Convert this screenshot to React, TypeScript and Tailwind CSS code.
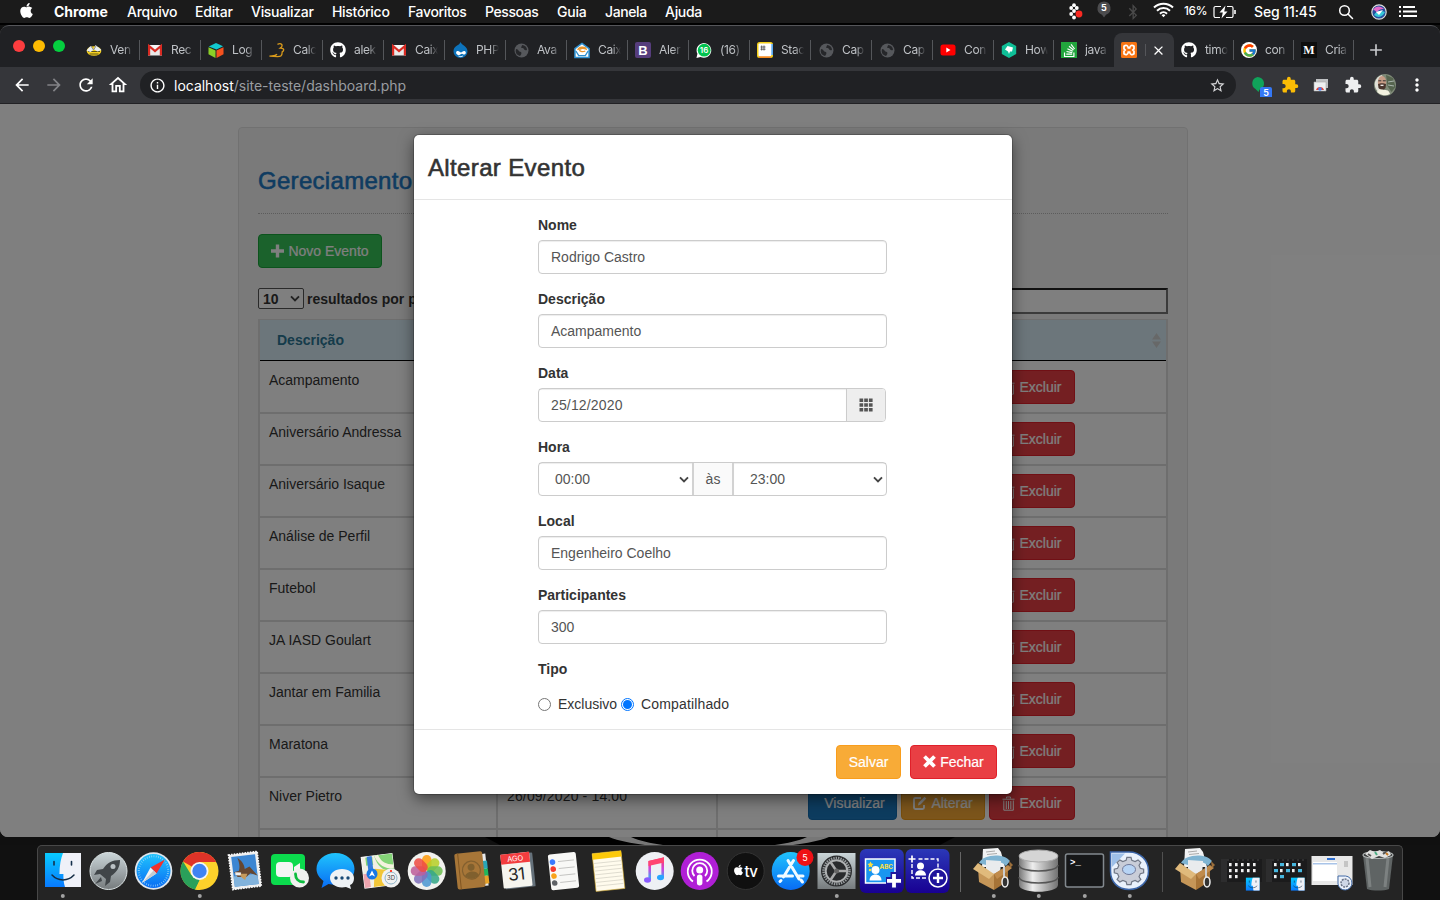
import React from "react";
import { FaApple, FaGithub, FaBluetoothB, FaStackOverflow } from "react-icons/fa";
import {
  MdArrowBack,
  MdArrowForward,
  MdRefresh,
  MdOutlineHome,
  MdInfoOutline,
  MdStarOutline,
  MdMoreVert,
  MdExtension,
  MdClose,
  MdAdd,
} from "react-icons/md";
import { FcGoogle } from "react-icons/fc";

/* ---------- menu bar ---------- */

function MenuBar() {
  return (
    <header className="flex h-[23px] items-center bg-[#1b1b1b] text-[14px] font-medium text-white whitespace-nowrap">
      <div className="flex w-[54px] justify-center pr-px pb-0.5"><FaApple className="h-[17px] w-[17px]" /></div>
      <span className="w-[73px] pb-px font-bold tracking-[-0.05px]">Chrome</span>
      <span className="w-[68px] pb-px tracking-[-0.25px]">Arquivo</span>
      <span className="w-[56px] pb-px tracking-[-0.2px]">Editar</span>
      <span className="w-[81px] pb-px tracking-[-0.3px]">Visualizar</span>
      <span className="w-[76px] pb-px tracking-[-0.3px]">Histórico</span>
      <span className="w-[77px] pb-px tracking-[-0.35px]">Favoritos</span>
      <span className="w-[72px] pb-px tracking-[-0.4px]">Pessoas</span>
      <span className="w-[48px] pb-px tracking-[-0.2px]">Guia</span>
      <span className="w-[60px] pb-px tracking-[-0.4px]">Janela</span>
      <span className="pb-px tracking-[-0.3px]">Ajuda</span>
      <div className="ml-auto flex h-full w-[380px] items-center">
        <span className="flex w-[30px] justify-center">
          <svg width="15" height="18" viewBox="0 0 15 18">
            <g fill="#fff">
              <circle cx="6" cy="2.2" r="1.9" /><circle cx="3.2" cy="5" r="1.9" /><circle cx="8.800" cy="5" r="1.9" />
              <circle cx="6" cy="8" r="1.9" /><circle cx="3.2" cy="11" r="1.9" /><circle cx="6" cy="14.500" r="1.9" />
            </g>
            <circle cx="11" cy="11" r="3.4" fill="#fa2a22" />
          </svg>
        </span>
        <span className="flex w-[28px] justify-center pb-1">
          <svg width="16" height="17" viewBox="0 0 16 17">
            <path d="M8 .5a6.8 6.8 0 0 1 2 13.2L8 16.500l-2-2.8A6.8 6.8 0 0 1 8 .5z" fill="#4c4c4e" />
            <text x="8" y="10.300" textAnchor="middle" fontSize="9" fontWeight="700" fill="#fff">5</text>
          </svg>
        </span>
        <span className="flex w-[29px] justify-center text-[#4a4a4a]"><FaBluetoothB className="h-[16px] w-[14px]" /></span>
        <span className="flex w-[37px] pb-1 pl-[6px]">
          <svg width="21" height="16" viewBox="0 0 21 16" fill="none" stroke="#fff" strokeWidth="2">
            <path d="M1 5.500a13.600 13.600 0 0 1 19 0M4 8.700a9.300 9.300 0 0 1 13 0M7 11.700a5 5 0 0 1 7 0" />
            <path d="M8.600 13.200L10.500 15.200l1.900-2a2.800 2.800 0 0 0-3.800 0z" fill="#fff" stroke="none" />
          </svg>
        </span>
        <span className="w-[29px] text-[11.8px] tracking-[-0.3px]">16%</span>
        <svg width="24" height="14" viewBox="0 0 24 14" fill="none" stroke="#fff" strokeWidth="1.2">
          <path d="M8 1.500H2.500a1.500 1.500 0 0 0-1.500 1.500v8a1.500 1.500 0 0 0 1.500 1.500H7M14 1.500h4.500A1.500 1.500 0 0 1 20 3v8a1.500 1.500 0 0 1-1.500 1.500H13" />
          <path d="M22 5v4" strokeWidth="1.600" />
          <path d="M12.500.500L6.500 7.500h3.300l-1.300 6L14.500 6.500h-3.300z" fill="#fff" stroke="none" />
        </svg>
        <span className="ml-[17px] w-[83px] pb-px tracking-[-0.1px]">Seg 11:45</span>
        <svg className="ml-[1px]" width="16" height="16" viewBox="0 0 16 16" fill="none" stroke="#fff" strokeWidth="1.500">
          <circle cx="6.500" cy="6.500" r="4.800" /><path d="M10 10l4.500 4.500" strokeLinecap="round" />
        </svg>
        <svg className="ml-[17px]" width="16" height="16" viewBox="0 0 16 16">
          <circle cx="8" cy="8" r="7.2" fill="#264e9c" stroke="#ddd" strokeWidth="1.2" />
          <path d="M2 6c3-5 8-4 11-1-4 0-6 1-7 4-1-2-2-3-4-3z" fill="#e56acb" />
          <path d="M3 11c2-4 7-5 11-3-2 4-6 7-11 3z" fill="#35c7d9" />
          <path d="M5 8l7-2-4 5z" fill="#fff" />
        </svg>
        <svg className="ml-[12px]" width="18" height="13" viewBox="0 0 18 13" stroke="#fff" strokeWidth="2">
          <path d="M0 2h2M0 6.500h2M0 11h2M4 2h12M4 6.500h14M4 11h14" />
        </svg>
      </div>
    </header>
  );
}

/* ---------- favicons ---------- */

const Gmail = () => (
  <svg width="14" height="14" viewBox="0 0 14 14">
    <path d="M0 2h14v10.500H0z" fill="#e9e9e9" />
    <path d="M1.100 12.500V3L7 8l5.900-5v9.500" fill="none" stroke="#d92a22" strokeWidth="2.200" />
    <path d="M2.500 2h9L7 6z" fill="#f7f7f7" />
  </svg>
);
const Planet = () => (
  <svg width="15" height="15" viewBox="0 0 15 15">
    <circle cx="7.500" cy="7.500" r="7" fill="#56585c" />
    <path d="M2 6c3 0 2 3 5 3 1 1 0 3-1 4-3-1-5-3-4-7zM8 2c0 2-2 2 0 3 3 0 1 3 5 2 0-3-2-4.500-5-5z" fill="#26272a" />
  </svg>
);
const Github = () => <FaGithub className="h-4 w-4 text-white" />;
const Bee = () => (
  <svg width="16" height="16" viewBox="0 0 16 16">
    <ellipse cx="8" cy="9" rx="7.300" ry="4.800" fill="#f5d020" />
    <path d="M2 9.500h12M3.500 12h9" stroke="#5e5415" />
    <path d="M.5 8.500L4.500 4l3 3.500L9.500 3 15.500 8l-4 1.500L8 7.500 4.500 10z" fill="#e8edf3" />
    <path d="M5 4l2.500 4L10 4" stroke="#8b8e90" fill="none" />
  </svg>
);
const Cube = () => (
  <svg width="17" height="17" viewBox="0 0 17 17">
    <path d="M8.500.5L16 4 9 7.500.8 4.200z" fill="#12c9cf" />
    <path d="M.5 5L8 8.500v8L.5 12.500z" fill="#8bcf26" />
    <path d="M9 8.500L16.500 5v7.500l-7.500 4z" fill="#f4511e" />
  </svg>
);
const Duck = () => (
  <svg width="17" height="17" viewBox="0 0 17 17" fill="none" stroke="#d89a1c" strokeWidth="1.400">
    <path d="M9 2c4-2 7 1 3 4 5 0 4 3 2 4 0 5-2 5-5 5L.5 14.500c3-.5 6 .5 8-2" />
  </svg>
);
const Mail = () => (
  <svg width="17" height="17" viewBox="0 0 17 17">
    <path d="M1 6.500L8.500 1 16 6.500V16H1z" fill="#fff" stroke="#2d8fd0" strokeWidth="1.600" />
    <path d="M2 9l3 5h7l3-5" fill="none" stroke="#2d8fd0" strokeWidth="1.400" />
    <path d="M4 8c1-4 8-4 9-1-3-1-7-1-7 1s4 2 6 1" fill="none" stroke="#e8952e" strokeWidth="1.400" />
  </svg>
);
const Boot = () => <span className="flex h-4 w-4 shrink-0 items-center justify-center rounded-[2px] bg-[#563d7c] font-['Liberation_Sans',sans-serif] text-[13px] leading-none font-bold text-white">B</span>;
const Whats = () => (
  <svg width="17" height="17" viewBox="0 0 17 17">
    <path d="M.5 16.500l1-4.500a7.800 7.800 0 1 1 3.300 3.300z" fill="#fff" />
    <circle cx="8.700" cy="8.200" r="6.800" fill="#00c34e" />
    <text x="8.500" y="11.200" textAnchor="middle" fontSize="8.500" fontWeight="600" fill="#fff">16</text>
  </svg>
);
const Stackblock = () => (
  <svg width="16" height="16" viewBox="0 0 16 16">
    <rect width="16" height="16" rx="2.500" fill="#f4cf1a" />
    <path d="M14 2h2v11h-2z" fill="#5aa9ee" />
    <path d="M2 14h12v2H2z" fill="#f58a1f" />
    <rect x="1.500" y="1.500" width="12.800" height="12.800" rx="1" fill="#fff" />
    <path d="M4.700 3.500v5M7 3.500v5M3.500 5h5M3.500 7.200h5" stroke="#444" strokeWidth=".8" />
  </svg>
);
const Youtube = () => (
  <svg width="16" height="12" viewBox="0 0 16 12"><rect x=".5" y=".5" width="15" height="11" rx="2.500" fill="#f00" /><path d="M6.300 3.500v5l4.200-2.500z" fill="#fff" /></svg>
);
const Hex = () => (
  <svg width="16" height="16" viewBox="0 0 16 16">
    <path d="M8 0l7.200 4v8L8 16 .8 12V4z" fill="#0fbf97" />
    <path d="M6.500 4l5.500 1.500L11 9.500H9L8 12 7 9.500 4 7.500z" fill="#fff" />
  </svg>
);
const StackO = () => <span className="flex h-4 w-4 shrink-0 items-center justify-center bg-[#22a63d] text-white"><FaStackOverflow className="h-[15px] w-[15px]" /></span>;
const Google = () => <span className="flex h-4 w-4 shrink-0 items-center justify-center rounded-full bg-white"><FcGoogle className="h-[15px] w-[15px]" /></span>;
const Medium = () => <span className="flex h-4 w-4 shrink-0 items-center justify-center bg-[#0d0d0d] font-['Liberation_Serif',serif] text-[12px] leading-none font-bold text-white">M</span>;
const Drupal = () => (
  <svg width="15" height="16" viewBox="0 0 15 16">
    <path d="M7.500 0c1 2 2 2.500 4 4 2 1.600 3 3.500 3 5.500a7 6.500 0 0 1-14 0C.5 7 1.500 5.500 3 4.300 5 3 7 2 7.500 0z" fill="#0d73bb" />
    <path d="M3.500 9.500c2-1.500 3.500 1 4.500 1s2-2 4-1.300c2 1.300 0 4-1.500 3.300-1-.8-2-1-3.500.2-2 1.300-5-1.200-3.500-3.200z" fill="#fff" />
    <path d="M5.500 14c1.500.8 3 .8 4.300 0" fill="none" stroke="#fff" />
  </svg>
);
const Xampp = () => (
  <svg width="16" height="16" viewBox="0 0 16 16">
    <rect width="16" height="16" rx="1.500" fill="#f77412" />
    <path d="M3 4.200c2-1.500 4-.8 4.300 1.800h1.400C9 3.400 11 2.700 13 4.200v2.600L11.800 8l1.200 1.200v2.600c-2 1.500-4 .8-4.300-1.800H7.300C7 12.600 5 13.300 3 11.800V9.200L4.200 8 3 6.800z" fill="none" stroke="#fff" strokeWidth="1.700" />
  </svg>
);

const wideTabs: [string, React.FC][] = [
  ["Ven", Bee], ["Rec", Gmail], ["Log", Cube], ["Calc", Duck], ["alek", Github], ["Caix", Gmail],
  ["PHP", Drupal], ["Ava", Planet], ["Caix", Mail], ["Aler", Boot], ["(16)", Whats], ["Stac", Stackblock],
  ["Cap", Planet], ["Cap", Planet], ["Con", Youtube],
];
const midTabs: [string, React.FC][] = [["How", Hex], ["java", StackO]];
const endTabs: [string, React.FC][] = [["timo", Github], ["con", Google], ["Cria", Medium]];

function Tab({ label, Icon, wide, last }: { label: string; Icon: React.FC; wide?: boolean; last?: boolean }) {
  return (
    <div className={`flex h-[34px] shrink-0 items-center pl-[7px] ${wide ? "w-[61px]" : "w-[60px]"}`}>
      <span className="flex w-4 shrink-0 justify-center"><Icon /></span>
      <span className="ml-2 w-[23px] overflow-hidden text-[12px] tracking-[-0.35px] whitespace-nowrap text-[#bfc2c6] [mask-image:linear-gradient(to_right,black_60%,transparent)]">{label}</span>
      <span className={`ml-auto h-5 w-px ${last ? "bg-transparent" : "bg-[#54565a]"}`} />
    </div>
  );
}

function TabStrip() {
  return (
    <div className="flex h-[42px] items-end rounded-t-[9px] border-t border-[#55565a] bg-[#202124]">
      <div className="flex h-[41px] w-[79px] items-center gap-2 pb-0.5 pl-[13px]">
        <span className="h-3 w-3 rounded-full bg-[#fc3d3f]" />
        <span className="h-3 w-3 rounded-full bg-[#fdbb02]" />
        <span className="h-3 w-3 rounded-full bg-[#05cf3f]" />
      </div>
      {wideTabs.map(([l, I], i) => <Tab key={i} label={l} Icon={I} wide />)}
      {midTabs.map(([l, I], i) => <Tab key={i} label={l} Icon={I} last={i === 1} />)}
      <div className="flex h-[34px] w-[60px] items-center rounded-t-lg bg-[#35363a] pl-[7px]">
        <Xampp />
        <span className="ml-2 h-3 w-px bg-[#55565a]" />
        <MdClose className="ml-[5px] h-[15px] w-[15px] text-white" />
      </div>
      {endTabs.map(([l, I], i) => <Tab key={i} label={l} Icon={I} />)}
      <div className="flex h-[34px] items-center pl-[12px] text-[#c6c8cb]"><MdAdd className="h-5 w-5" /></div>
    </div>
  );
}

function Toolbar() {
  return (
    <div className="flex h-[37px] items-center border-b border-[#222225] bg-[#35363a] text-white">
      <div className="flex w-[140px] items-center pl-3">
        <MdArrowBack className="h-5 w-5" />
        <MdArrowForward className="ml-3 h-5 w-5 text-[#828387]" />
        <MdRefresh className="ml-3 h-5 w-5" />
        <MdOutlineHome className="ml-[11px] h-[22px] w-[22px]" />
      </div>
      <div className="flex h-7 w-[1096px] items-center rounded-full bg-[#202124] pl-[9px] pr-[10px]">
        <MdInfoOutline className="h-[17px] w-[17px]" />
        <p className="ml-2 text-[14px] tracking-[-0.01px] text-[#9a9da1]"><span className="text-white">localhost</span>/site-teste/dashboard.php</p>
        <MdStarOutline className="ml-auto h-[17px] w-[17px] text-[#d5d6d8]" />
      </div>
      <div className="ml-[14px] flex items-center">
        <svg width="22" height="24" viewBox="0 0 22 24">
          <path d="M7.500 4a6.500 6.500 0 0 1 2 12.700L8.500 19l-3-3A6.500 6.500 0 0 1 7.500 4z" fill="#10a35a" />
          <rect x="10" y="14" width="12" height="12" rx="2" fill="#3478f6" />
          <text x="16" y="23" textAnchor="middle" fontSize="9" fontWeight="600" fill="#fff">5</text>
        </svg>
        <MdExtension className="ml-[9px] h-[18px] w-[18px] text-[#fbbc05]" />
        <svg className="ml-[14px]" width="16" height="14" viewBox="0 0 16 14">
          <path d="M3 1h12v9H3z" fill="#bfc1c3" /><path d="M1 4h12v9H1z" fill="#eef0f1" stroke="#aaa" strokeWidth=".6" />
          <path d="M3 12a4.200 4.200 0 0 1 8 0z" fill="#e94335" /><circle cx="7" cy="11" r="1.800" fill="#4285f4" />
        </svg>
        <MdExtension className="ml-[15px] h-[18px] w-[18px] text-[#eeeff0]" />
        <svg className="ml-[12px]" width="22" height="22" viewBox="0 0 22 22">
          <circle cx="11" cy="11" r="11" fill="#7f8a78" />
          <path d="M1 8a11 11 0 0 1 7-7l3 10-4 9a11 11 0 0 1-6-12z" fill="#dfe0d8" />
          <path d="M12 1l7 3 2.500 9-4 5-4-6z" fill="#56654f" />
          <path d="M14 8l6-1M14 11l6 1" stroke="#aab5ae" />
          <ellipse cx="8" cy="8" rx="4.200" ry="6" fill="#c79c86" />
          <path d="M4 10c2-1 6-1 8 0l-.5 4c-2 2-5 2-7 0z" fill="#4a352d" /><path d="M4.300 6.800h3M8.800 6.800h3" stroke="#333" /><path d="M6.500 11.300h3" stroke="#fff" strokeWidth="1.200" />
          <path d="M3 18c2-4 4-2 6-2s6-1 7 4a11 11 0 0 1-13-2z" fill="#f3f2e0" />
        </svg>
        <MdMoreVert className="ml-[11px] h-5 w-5" />
      </div>
    </div>
  );
}

/* ---------- page ---------- */

const TrashIcon = () => (
  <svg width="13" height="15" viewBox="0 0 13 15" fill="none" stroke="#fff" strokeWidth="1">
    <path d="M4.500 2.500V1h4v1.500M.5 3.200h12M1.800 4.500v9.700h9.500V4.500M4.300 5v8M6.500 5v8M8.800 5v8" />
  </svg>
);
const EditIcon = () => (
  <svg width="14" height="14" viewBox="0 0 14 14" fill="none" stroke="#fff" strokeWidth="1.900">
    <path d="M8 2H2.500A1.500 1.500 0 0 0 1 3.500v8A1.500 1.500 0 0 0 2.500 13h7a1.500 1.500 0 0 0 1.500-1.500V9" />
    <path d="M5 9.500l.6-2.700L11.500.8l1.800 1.800-5.800 6z" fill="#fff" stroke="none" />
  </svg>
);
const Chevron = () => (
  <svg width="10" height="7" viewBox="0 0 10 7" fill="none" stroke="#444" strokeWidth="1.900"><path d="M1 1.300l4 4 4-4" /></svg>
);

function Excluir() {
  return (
    <button className="flex h-[34px] w-[86px] items-center justify-center gap-1 rounded border border-[#e0202a] bg-[#e93f44] text-white [-webkit-text-stroke:0.2px_#fff]"><TrashIcon />Excluir</button>
  );
}

const rows = ["Acampamento", "Aniversário Andressa", "Aniversário Isaque", "Análise de Perfil", "Futebol", "JA IASD Goulart", "Jantar em Familia", "Maratona", "Niver Pietro"];

function EventsPage() {
  return (
    <div className="mx-auto mt-[23px] h-[800px] w-[950px] rounded border border-[#e3e3e3] bg-[#f5f5f5] px-[19px] pt-[37px]">
      <h2 className="h-[49px] border-b border-dotted border-[#b8b8b8] text-[24px] leading-[31px] tracking-[0.3px] text-[#1e78c2] [-webkit-text-stroke:0.6px_#1e78c2]">Gereciamento</h2>
      <button className="mt-5 flex h-[34px] w-[124px] items-center justify-center gap-1 rounded border border-[#18a63a] bg-[#36c458] text-white [-webkit-text-stroke:0.2px_#fff]">
        <svg width="13" height="14" viewBox="0 0 13 14" stroke="#fff" strokeWidth="3.400"><path d="M6.500.500v13M0 7h13" /></svg>
        Novo Evento
      </button>
      <div className="mt-5 flex h-[31px] items-start justify-between font-bold">
        <div className="flex items-center gap-[3px]">
          <div className="flex h-[21px] w-[46px] items-center justify-between rounded-[2px] border border-[#555] bg-white pr-[3px] pl-1">10<Chevron /></div>
          resultados por p
        </div>
        <div className="h-[26px] w-[200px] border-2 border-[#767676] border-t-[#222] bg-white" />
      </div>
      <div className="border-2 border-t border-[#ddd] bg-white">
        <div className="flex h-[41px] items-center justify-between border-b border-black bg-[#d9edf7] pr-[5px] pl-[17px] font-bold text-[#2a7695]">
          Descrição
          <svg width="9" height="15" viewBox="0 0 9 15" fill="#cfd0d0"><path d="M4.500 0L9 6.500H0zM0 8.500h9L4.500 15z" /></svg>
        </div>
        {rows.map((name, i) => (
          <div key={name} className={`flex border-b-2 border-[#ddd] ${i === 0 ? "h-[53px] pt-px" : "h-[52px]"}`}>
            <div className="w-[238px] border-r-2 border-[#ddd] pt-2 pl-[9px]">{name}</div>
            <div className="w-[220px] border-r-2 border-[#ddd] pt-2 pl-[9px] tracking-[0.15px]">{i === 8 ? "26/09/2020 - 14:00" : ""}</div>
            <div className="flex flex-1 justify-end gap-1 pt-2 pr-[91px]">
              {i === 8 && (
                <>
                  <button className="h-[34px] w-[89px] rounded border border-[#126cb0] bg-[#1a78be] pl-1 text-white [-webkit-text-stroke:0.2px_#fff]">Visualizar</button>
                  <button className="flex h-[34px] w-[84px] items-center justify-center gap-1 rounded border border-[#ef9b18] bg-[#f8ab37] text-white [-webkit-text-stroke:0.2px_#fff]"><EditIcon />Alterar</button>
                </>
              )}
              <Excluir />
            </div>
          </div>
        ))}
        <div className="flex h-[52px]">
          <div className="w-[238px] border-r-2 border-[#ddd]" />
          <div className="w-[220px] border-r-2 border-[#ddd]" />
        </div>
      </div>
    </div>
  );
}

/* ---------- modal ---------- */

function Field({ label, children }: { label: string; children: React.ReactNode }) {
  return (
    <div className="mb-[15px]">
      <div className="mb-[5px] h-5 font-bold">{label}</div>
      {children}
    </div>
  );
}

function TextBox({ value }: { value: string }) {
  return <div className="flex h-[34px] items-center rounded border border-[#ccc] px-3 text-[#555] shadow-[inset_0_1px_1px_rgba(0,0,0,0.075)]">{value}</div>;
}

function Modal() {
  return (
    <section className="h-[659px] w-[598px] rounded-[5px] bg-white shadow-[0_5px_15px_rgba(0,0,0,0.5),0_0_0_1px_rgba(0,0,0,0.2)]">
      <div className="flex h-[65px] items-center border-b border-[#e5e5e5] pt-0.5 pl-[14px] text-[24px] tracking-[0.36px] [-webkit-text-stroke:0.6px_#333]">Alterar Evento</div>
      <div className="h-[529px] pt-[15px] pr-[125px] pl-[124px]">
        <Field label="Nome"><TextBox value="Rodrigo Castro" /></Field>
        <Field label="Descrição"><TextBox value="Acampamento" /></Field>
        <Field label="Data">
          <div className="flex h-[34px] w-[348px] rounded border border-[#ccc] text-[#555]">
            <div className="flex flex-1 items-center pl-3 tracking-[0.15px] shadow-[inset_0_1px_1px_rgba(0,0,0,0.075)]">25/12/2020</div>
            <div className="flex w-[39px] items-center justify-center rounded-r-[3px] border-l border-[#ccc] bg-[#eee]">
              <svg width="14" height="14" viewBox="0 0 14 14" fill="#555"><path d="M.5.500h3.700v3.500H.5zM5.200.500h3.700v3.500H5.200zM9.900.500h3.700v3.500H9.900zM.5 5.300h3.700v3.500H.5zM5.200 5.300h3.700v3.500H5.200zM9.900 5.300h3.700v3.500H9.900zM.5 10h3.700v3.500H.5zM5.200 10h3.700v3.500H5.200zM9.900 10h3.700v3.500H9.900z" /></svg>
            </div>
          </div>
        </Field>
        <Field label="Hora">
          <div className="flex h-[34px] w-[349px] rounded border border-[#ccc] text-[#555]">
            <div className="flex w-[153px] items-center justify-between pr-[3px] pl-4 shadow-[inset_0_1px_1px_rgba(0,0,0,0.075)]">00:00<Chevron /></div>
            <div className="flex w-[42px] items-center justify-center border-x-2 border-[#d2d2d2] bg-[#fafafa]">às</div>
            <div className="flex flex-1 items-center justify-between pr-[3px] pl-4 shadow-[inset_0_1px_1px_rgba(0,0,0,0.075)]">23:00<Chevron /></div>
          </div>
        </Field>
        <Field label="Local"><TextBox value="Engenheiro Coelho" /></Field>
        <Field label="Participantes"><TextBox value="300" /></Field>
        <Field label="Tipo">
          <div className="flex h-[40px] items-center">
            <span className="h-[13px] w-[13px] rounded-full border border-[#767676]" />
            <span className="ml-[7px] w-[63px]">Exclusivo</span>
            <span className="flex h-[13px] w-[13px] items-center justify-center rounded-full border border-[#0075ff]"><span className="h-[9px] w-[9px] rounded-full bg-[#0075ff]" /></span>
            <span className="ml-[7px] tracking-[0.15px]">Compatilhado</span>
          </div>
        </Field>
      </div>
      <div className="flex justify-end gap-[9px] border-t border-[#e5e5e5] pt-[15px] pr-[15px] text-white [-webkit-text-stroke:0.2px_#fff]">
        <button className="h-[34px] w-[65px] rounded border border-[#f99d1c] bg-[#f8ab37]">Salvar</button>
        <button className="flex h-[34px] w-[87px] items-center justify-center gap-1 rounded border border-[#e0202a] bg-[#e93f44]">
          <svg className="mb-0.5" width="13" height="13" viewBox="0 0 13 13" stroke="#fff" strokeWidth="3.800"><path d="M1.500 1.500l10 10M11.500 1.500l-10 10" /></svg>
          Fechar
        </button>
      </div>
    </section>
  );
}

/* ---------- dock ---------- */

function Slot({ children, dot }: { children: React.ReactNode; dot?: boolean }) {
  return (
    <svg className="h-[54px] w-[45.5px] shrink-0" viewBox="0 0 45.5 54">
      {children}
      {dot && <circle cx="22.800" cy="50" r="2" fill="#a2a2a2" />}
    </svg>
  );
}

const Face = () => (
  <g>
    <path d="M5 7h36v34H5z" fill="url(#finderBlue)" />
    <path d="M23 7h18v34H25c-1.300-4-1.700-8-1.600-13h-4C19.500 19 21 12 23 7z" fill="#eff1f8" />
    <path d="M14 15.500v3.500M31.500 15.500v3.500" stroke="#14304c" strokeWidth="1.600" strokeLinecap="round" />
    <path d="M12 29c6 6.500 16 6.500 22 0" fill="none" stroke="#142c44" strokeWidth="1.500" strokeLinecap="round" />
  </g>
);

const Box = () => (
  <g>
    <path d="M12 3l15-1 3 4 4 15H11z" fill="#f1f2f3" /><path d="M15 6l9-1M16 8.500l10-1" stroke="#aaa" />
    <path d="M8 17c3-8 24-11 31-2l-4 5c-6-6-14-6-20-1z" fill="#7fb4d2" />
    <path d="M15 14l15 1-1 14-14-2z" fill="#e9ebed" />
    <path d="M7 22l16 6v16L8 36z" fill="#c59658" /><path d="M23 28l14-8v15l-14 9z" fill="#a77437" />
    <path d="M7 17l16 11-5 5L2 23z" fill="#e0ba7c" /><path d="M23 28l14-9 4 3-15 11z" fill="#c08b4c" />
    <path d="M38 15l4 4-3 3z" fill="#9b6f3b" />
    <path d="M33 21v12" stroke="#ccc" strokeWidth="2" /><ellipse cx="34" cy="36" rx="3" ry="5" fill="#333" stroke="#eee" strokeWidth="1.500" />
  </g>
);

const gearPath = "M20 7h5l1 4 4 1.600 3.600-2.200 3.400 3.500-2.200 3.600 1.600 4 4 1v5l-4 1-1.600 4L37 36l-3.400 3.500-3.600-2.100-4 1.600-1 4h-5l-1-4-4-1.600-3.600 2.100L8 36l2.200-3.500-1.600-4-4-1v-5l4-1 1.600-4L8 13.900l3.400-3.500 3.600 2.200 4-1.600z";

const FinderWindow = ({ blue }: { blue?: boolean }) => (
  <g>
    <path d="M2 13h41v23H2z" fill="#1b1b1c" /><path d="M2 13h6v23H2z" fill="#2d2d2e" /><path d="M8 14h33" stroke="#444" strokeDasharray="2 3" />
    {[0, 1, 2, 3, 4].map((x) => [0, 1, 2].map((y) => {
      const folder = blue && (x + y) % 2 === 1;
      return (y < 2 || x < 2) && <rect key={`${x}-${y}`} x={10 + x * 6} y={17 + y * 6} width={folder ? 4 : 2.6} height="3.200" fill={folder ? "#47b7df" : "#f1f1f1"} />;
    }))}
    <g transform="translate(25 29) scale(.38)"><Face /></g>
  </g>
);

function Dock() {
  return (
    <footer className="flex h-[55px] w-[1366px] rounded-t-[5px] border border-b-0 border-[#484848] bg-[#242424] pl-[2px]">
      <Slot dot>
        <defs>
          <linearGradient id="finderBlue" x1="0" y1="0" x2="0" y2="1"><stop stopColor="#08cbff" /><stop offset="1" stopColor="#087aff" /></linearGradient>
          <linearGradient id="silver" x1="0" y1="0" x2="0" y2="1"><stop stopColor="#cbd6d9" /><stop offset="1" stopColor="#767b7d" /></linearGradient>
          <linearGradient id="sky" x1="0" y1="0" x2="0" y2="1"><stop stopColor="#20c4fd" /><stop offset="1" stopColor="#086cf4" /></linearGradient>
          <linearGradient id="navy" x1="0" y1="0" x2="0" y2="1"><stop stopColor="#2b38b8" /><stop offset="1" stopColor="#180092" /></linearGradient>
          <linearGradient id="note" x1="0" y1="0" x2="0" y2="1"><stop stopColor="#ff386b" /><stop offset=".5" stopColor="#cb45de" /><stop offset="1" stopColor="#20bafa" /></linearGradient>
          <linearGradient id="disk"><stop stopColor="#777" /><stop offset=".35" stopColor="#eee" /><stop offset="1" stopColor="#727272" /></linearGradient>
        </defs>
        <Face />
      </Slot>
      <Slot>
        <circle cx="22.500" cy="25" r="18.500" fill="url(#silver)" stroke="#dce4e5" />
        <path d="M34 14c-8 0-13 3-17 9l-6 1-3 5 6-1 6 5-1 7 5-4 1-6c6-4 9-9 9-16zM15 31l-6 7 7-3z" fill="#414649" /><circle cx="27" cy="20.500" r="2.500" fill="#bbc2c5" />
      </Slot>
      <Slot>
        <circle cx="22.500" cy="25" r="18.800" fill="#dfe6ed" /><circle cx="22.500" cy="25" r="17" fill="url(#sky)" />
        <circle cx="22.500" cy="25" r="14.700" fill="none" stroke="#a3dcf9" strokeWidth="2" strokeDasharray=".6 1.700" />
        <path d="M34 13.500L19.500 21.500l6 6z" fill="#f1312c" /><path d="M11 37l8.500-15.500 6 6z" fill="#f3f3f3" /><path d="M11 37l11.500-12.500 3 3z" fill="#c6ccd1" />
      </Slot>
      <Slot dot>
        <circle cx="22.500" cy="25" r="19" fill="#fdd12b" />
        <path d="M22.500 25L6 15.500A19 19 0 0 1 39.200 16H22.500z" fill="#df3328" /><path d="M6 15.500L14.300 29l8 4.500L20.500 44A19 19 0 0 1 6 15.500z" fill="#2aa05a" />
        <path d="M22.500 34l8-4.500L22 44c-1 0-2.500 0-4-.5z" fill="#fdd12b" /><path d="M14 29l8.500 5-5 9.500z" fill="#2aa05a" />
        <circle cx="22.500" cy="25" r="9" fill="#f5f5f5" /><circle cx="22.500" cy="25" r="7.200" fill="#3f83f2" />
      </Slot>
      <Slot>
        <g transform="rotate(-7 23 25)">
          <rect x="8.500" y="7" width="29" height="35" fill="#eee" stroke="#fff" strokeWidth="1.500" strokeDasharray="1.500 1.200" /><rect x="11" y="9.500" width="24" height="30" fill="#3c86d2" /><path d="M11 29h24v10.500H11z" fill="#82b3dc" />
          <path d="M17 11c3 3 6 6 6 12l5-2 7 10-7-3-4 3-9-1-3-5 5-1c2-5 1-9 0-13z" fill="#654630" /><path d="M17 27l8 1-3 6-3-3z" fill="#c69a5c" /><path d="M13 25l6 1-1 3-5-1z" fill="#eee" />
        </g>
      </Slot>
      <Slot>
        <rect x="3" y="8" width="34" height="31" rx="4" fill="#0bdb4d" /><rect x="8" y="16" width="17" height="15" rx="4" fill="#f3f5f4" /><path d="M26 21l6-4v13l-6-4z" fill="#f3f5f4" />
        <circle cx="31.500" cy="32" r="9.500" fill="#f0f1ef" /><path d="M27.500 28c0 5 3 8 8 8" fill="none" stroke="#0bbd3e" strokeWidth="2.800" strokeLinecap="round" />
      </Slot>
      <Slot>
        <path d="M22.500 7c11 0 19 7 19 16s-8 16-19 16l-7-1-7 4 2-7c-4-3-7-7-7-12 0-9 8-16 19-16z" fill="url(#sky)" />
        <path d="M29 23c7 0 12 4 12 9 0 3-1 6-4 7l1 4-5-2c-9 2-16-3-16-9 0-5 5-9 12-9z" fill="#eef2f5" />
        <g fill="#174a76"><circle cx="23" cy="32" r="1.700" /><circle cx="29" cy="32" r="1.700" /><circle cx="35" cy="32" r="1.700" /></g>
      </Slot>
      <Slot>
        <g transform="rotate(-7 22 25)"><path d="M4 9h31v31H4z" fill="#f2efe3" stroke="#fff" /><path d="M17 9h18v17c-10 0-16-5-18-17z" fill="#84d477" /><path d="M8 10h7v8H8z" fill="#84d477" /><path d="M13 40l3-18 19 4v14z" fill="#f2c638" /><path d="M4 26h6v14H4z" fill="#eda4ae" /><path d="M12 9v21" stroke="#367ddc" strokeWidth="5" /><path d="M19 9c3 9 8 12 16 13" fill="none" stroke="#f4f2df" strokeWidth="4" /></g>
        <circle cx="13" cy="28" r="5.500" fill="#1878e5" /><path d="M13 24.500l3 6-3-1.500-3 1.500z" fill="#fff" />
        <circle cx="32" cy="32" r="9.500" fill="#f1f2f2" /><circle cx="32" cy="32" r="6" fill="none" stroke="#8fb5c9" /><text x="32" y="34" fontSize="6" textAnchor="middle" fill="#444">3D</text><path d="M32 24v2" stroke="#f43" strokeWidth="2" />
      </Slot>
      <Slot>
        <circle cx="22.700" cy="25" r="19" fill="#f2f2ef" />
        {["#ff9c0f", "#b7cf28", "#6dbd51", "#36a887", "#4d98d2", "#8171bb", "#be5e9b", "#ee4d45"].map((c, i) => (
          <rect key={c} x="18" y="9" width="9.500" height="15.500" rx="4.700" fill={c} fillOpacity=".87" transform={`rotate(${i * 45} 22.700 25)`} />
        ))}
      </Slot>
      <Slot>
        <g transform="rotate(-6 23 25)"><path d="M32 9h5v32h-5z" fill="#e8eaec" /><path d="M33 16h5v8h-5z" fill="#29a6b7" /><path d="M33 24h5v7h-5z" fill="#20b65c" /><path d="M33 31h5v8h-5z" fill="#e6a228" /><rect x="6" y="6" width="28" height="36" rx="2" fill="#a77638" /><path d="M9.500 6v36" stroke="#815622" /><circle cx="21.500" cy="24" r="9" fill="none" stroke="#83602f" strokeWidth="1.200" /><circle cx="21.500" cy="21" r="3.500" fill="#80602e" /><path d="M14.500 29.500c2-5.500 12-5.500 14 0-4 4-10 4-14 0z" fill="#80602e" /></g>
      </Slot>
      <Slot>
        <g transform="rotate(-6 23 25)"><rect x="9" y="8" width="30" height="34" rx="1" fill="#65717a" /><rect x="7" y="7" width="29" height="34" rx="1" fill="#f6f5ef" /><path d="M7 7h29v10H7z" fill="#f23d3f" /><text x="21.500" y="15" textAnchor="middle" fontSize="7.500" fill="#fff">AGO</text><text x="21" y="34" textAnchor="middle" fontSize="17" letterSpacing="-0.5" fill="#272727">31</text></g>
      </Slot>
      <Slot>
        <g transform="rotate(-6 23 25)"><rect x="8.500" y="7" width="28" height="36" rx="2" fill="#f8f8f6" />{["#3979ff", "#f53b2f", "#f9a21a", "#5f6266"].map((c, i) => <g key={c}><circle cx="12.500" cy={15 + i * 7} r="2.800" fill={c} /><path d={`M18 ${15 + i * 7}h16`} stroke="#b9b9b7" strokeWidth=".8" /></g>)}</g>
      </Slot>
      <Slot>
        <g transform="rotate(-6 23 25)"><rect x="8" y="6" width="29" height="38" fill="#fffbed" stroke="#cca329" strokeWidth=".6" /><path d="M8 6h29v6H8z" fill="#fcc90a" />{[0, 1, 2, 3, 4, 5, 6].map((i) => <path key={i} d={`M9 ${16 + i * 3.8}h27`} stroke="#d3d0c4" strokeWidth=".7" />)}</g>
      </Slot>
      <Slot>
        <circle cx="22.700" cy="25" r="19" fill="#eef0f4" /><path d="M17.700 33.500V16l13-3v18" stroke="url(#note)" strokeWidth="2.600" fill="none" /><path d="M16.500 15l15.500-3.500v5L16.500 20z" fill="#ff4470" /><ellipse cx="15.500" cy="34" rx="3.500" ry="2.800" fill="#8a5bff" /><ellipse cx="28.500" cy="31.500" rx="3.500" ry="2.800" fill="#28a5ff" />
      </Slot>
      <Slot>
        <circle cx="22.700" cy="25" r="19" fill="#b01fd6" /><g fill="none" stroke="#fff" strokeWidth="1.800"><path d="M16 35.500a12 12 0 1 1 13.500 0" /><path d="M17.500 30a7.500 7.500 0 1 1 10.500 0" /></g><circle cx="22.700" cy="24" r="3.500" fill="#fff" /><rect x="19.900" y="28.500" width="5.500" height="11" rx="2.700" fill="#fff" />
      </Slot>
      <Slot>
        <circle cx="22.700" cy="25" r="18.500" fill="#101010" stroke="#333" /><FaApple x={9.5} y={18} width={12} height={14} color="#fff" fontSize={12} /><text x="21.500" y="30.500" fontSize="15" fontWeight="500" letterSpacing="-0.6" fill="#fff">tv</text>
      </Slot>
      <Slot>
        <circle cx="22.700" cy="25" r="19" fill="url(#sky)" /><path d="M20 14.500l11 18.500M25.500 14.500L15.500 31M13 34.500l-1 1M10.500 30h14M30 30h5M33 34l1.500 2" stroke="#f1fbff" strokeWidth="3" strokeLinecap="round" />
        <circle cx="37" cy="11.500" r="8.500" fill="#ef1015" /><text x="37" y="14.700" textAnchor="middle" fontSize="9" fill="#fff">5</text>
      </Slot>
      <Slot dot>
        <rect x="3.500" y="7" width="38" height="36" fill="url(#silver)" /><circle cx="22.500" cy="25" r="15.500" fill="#292b2d" /><circle cx="22.500" cy="25" r="13" fill="none" stroke="#969b9d" strokeWidth="2.500" strokeDasharray="1.400 1" /><circle cx="22.500" cy="25" r="10.800" fill="none" stroke="#aeb1b2" strokeWidth="2" /><path d="M22.500 25h11M22.500 25l-6-9M22.500 25l-6 9" stroke="#a9aaab" strokeWidth="2.500" /><circle cx="22.500" cy="25" r="2.500" fill="#666" />
      </Slot>
      <Slot>
        <rect x=".8" y="3" width="44" height="44" rx="6" fill="url(#navy)" /><path d="M6.500 13H36v24H6.500z" fill="#1a96f0" stroke="#fff" strokeWidth="1.500" /><circle cx="16.500" cy="24" r="4" fill="#fff" /><path d="M10.500 34.500c0-8 12-8 12 0z" fill="#fff" /><path d="M11.500 15.500l1 2 2 .5-1.500 1.500.5 2-2-1-2 1 .5-2-1.500-1.500 2-.5z" fill="#ffe03b" /><circle cx="11" cy="24" r="1.200" fill="#ffe03b" /><text x="20.500" y="23.200" fontSize="6.300" fontWeight="700" fill="#ffe03b">ABC</text><path d="M35 26v16.500M27 34.500h16" stroke="#20149c" strokeWidth="7" /><path d="M35 28v13.500M28 34.800h14" stroke="#fff" strokeWidth="3.800" />
      </Slot>
      <Slot>
        <rect x=".5" y="3" width="44" height="44" rx="6" fill="url(#navy)" /><path d="M3.500 13h7M7 9.500v7" stroke="#fff" strokeWidth="1.700" /><path d="M13.500 13H33v11M7 18v14h16" fill="none" stroke="#fff" strokeWidth="1.400" strokeDasharray="4 2" /><circle cx="15.500" cy="20" r="3.500" fill="#fff" /><path d="M10 29.500c0-7 11-7 11 0z" fill="#fff" /><circle cx="33" cy="32" r="9" fill="#20149c" stroke="#fff" strokeWidth="1.500" /><path d="M33 27v10M28 32h10" stroke="#fff" strokeWidth="2.400" />
      </Slot>
      <div className="flex w-[20.5px] justify-center pt-1.5"><span className="h-10 w-px bg-[#666]" /></div>
      <Slot dot><Box /></Slot>
      <Slot dot>
        <path d="M3 10v29c0 9 39 9 39 0V10z" fill="url(#disk)" /><ellipse cx="22.500" cy="10" rx="19.500" ry="6" fill="#d5d5d5" stroke="#aaa" /><path d="M3 19c0 8 39 8 39 0M3 31c0 8 39 8 39 0" fill="none" stroke="#555" strokeWidth="1.500" />
      </Slot>
      <Slot dot><rect x="3.500" y="8" width="38" height="33" rx="2" fill="#161718" stroke="#82898e" strokeWidth="1.500" /><text x="8" y="19" fontFamily="Liberation Mono" fontSize="9" fontWeight="700" fill="#fff">&gt;_</text></Slot>
      <Slot dot>
        <path d="M3.500 6H22c11 0 19.500 8 19.500 19S33 43.500 22 43.500 3.500 36 3.500 25z" fill="#e9f1fc" stroke="#3c66a9" strokeWidth="1.500" /><path d="M5 7.500h13L5 21z" fill="#9dbfe8" /><path d={gearPath} transform="translate(3.500 6) scale(.82 .76)" fill="#c9cdd8" stroke="#707786" strokeWidth="1.500" /><ellipse cx="22" cy="23.500" rx="6.500" ry="5" fill="#b7d4f5" stroke="#70799a" />
      </Slot>
      <div className="flex w-[20.5px] justify-center pt-1.5"><span className="h-10 w-px bg-[#505050]" /></div>
      <Slot><Box /></Slot>
      <Slot><FinderWindow /></Slot>
      <Slot><FinderWindow blue /></Slot>
      <Slot>
        <rect x="1.500" y="10" width="41" height="29" fill="#e8e8e8" /><path d="M3 16h24v19H3z" fill="#fff" /><path d="M3 17h24v1.500H3z" fill="#a9c4e8" /><path d="M17 13h8" stroke="#2f6fd0" strokeWidth="2" /><path d="M36 15v6" stroke="#c5c5c5" strokeWidth="4" /><path d="M28 30h7.500a7 7 0 1 1-7.500 8z" fill="#eef3fb" stroke="#446ca8" /><circle cx="35" cy="37" r="4" fill="#cfd7e6" stroke="#6a7386" strokeWidth="1.500" strokeDasharray="2 1" />
      </Slot>
      <Slot>
        <path d="M8 9h30l-4 34c-5 2-17 2-22 0z" fill="#5f6464" /><path d="M12 12l3 29M33 12l-3 29" stroke="#9a9f9e" strokeWidth="3" opacity=".5" /><ellipse cx="23" cy="9" rx="15" ry="3.500" fill="#393c3c" stroke="#b4b8b8" strokeWidth="1.200" /><path d="M10 8l5-4 5 2 5-2 4 3 5-2 2 4-6 3-6-2-7 3z" fill="#e2e2e0" /><path d="M13 8l3 2M28 8l3-2" stroke="#555" strokeWidth="2" /><path d="M20 6l2 3" stroke="#4aae84" strokeWidth="2" /><path d="M31 7l2 2" stroke="#c4761f" strokeWidth="2" />
      </Slot>
    </footer>
  );
}

export default function App() {
  return (
    <div className="flex h-[900px] w-[1440px] flex-col overflow-hidden bg-[#111] font-['Inter',sans-serif]">
      <MenuBar />
      <div className="h-[2px] bg-black" />
      <TabStrip />
      <Toolbar />
      <main className="relative h-[733px] shrink-0 overflow-hidden rounded-b-[8px] bg-white pr-[14px] font-['Liberation_Sans',sans-serif] text-[14px] leading-5 text-[#333]">
        <EventsPage />
        <div className="absolute inset-0 flex justify-center bg-black/50 pt-[31px] pr-[14px]"><Modal /></div>
      </main>
      <div className="flex h-2 shrink-0 justify-center bg-[#101010]">
        <svg width="470" height="8" viewBox="0 0 470 8"><path d="M0 0h470l-15 8H15z" fill="#000" /><path d="M124 0h22c9 4 19 6 32 8h-18c-14-2-26-4-36-8zM322 0h22c-10 4-22 6-36 8h-18c13-2 23-4 32-8z" fill="#777" /></svg>
      </div>
      <div className="flex h-[55px] shrink-0 justify-center"><Dock /></div>
    </div>
  );
}
